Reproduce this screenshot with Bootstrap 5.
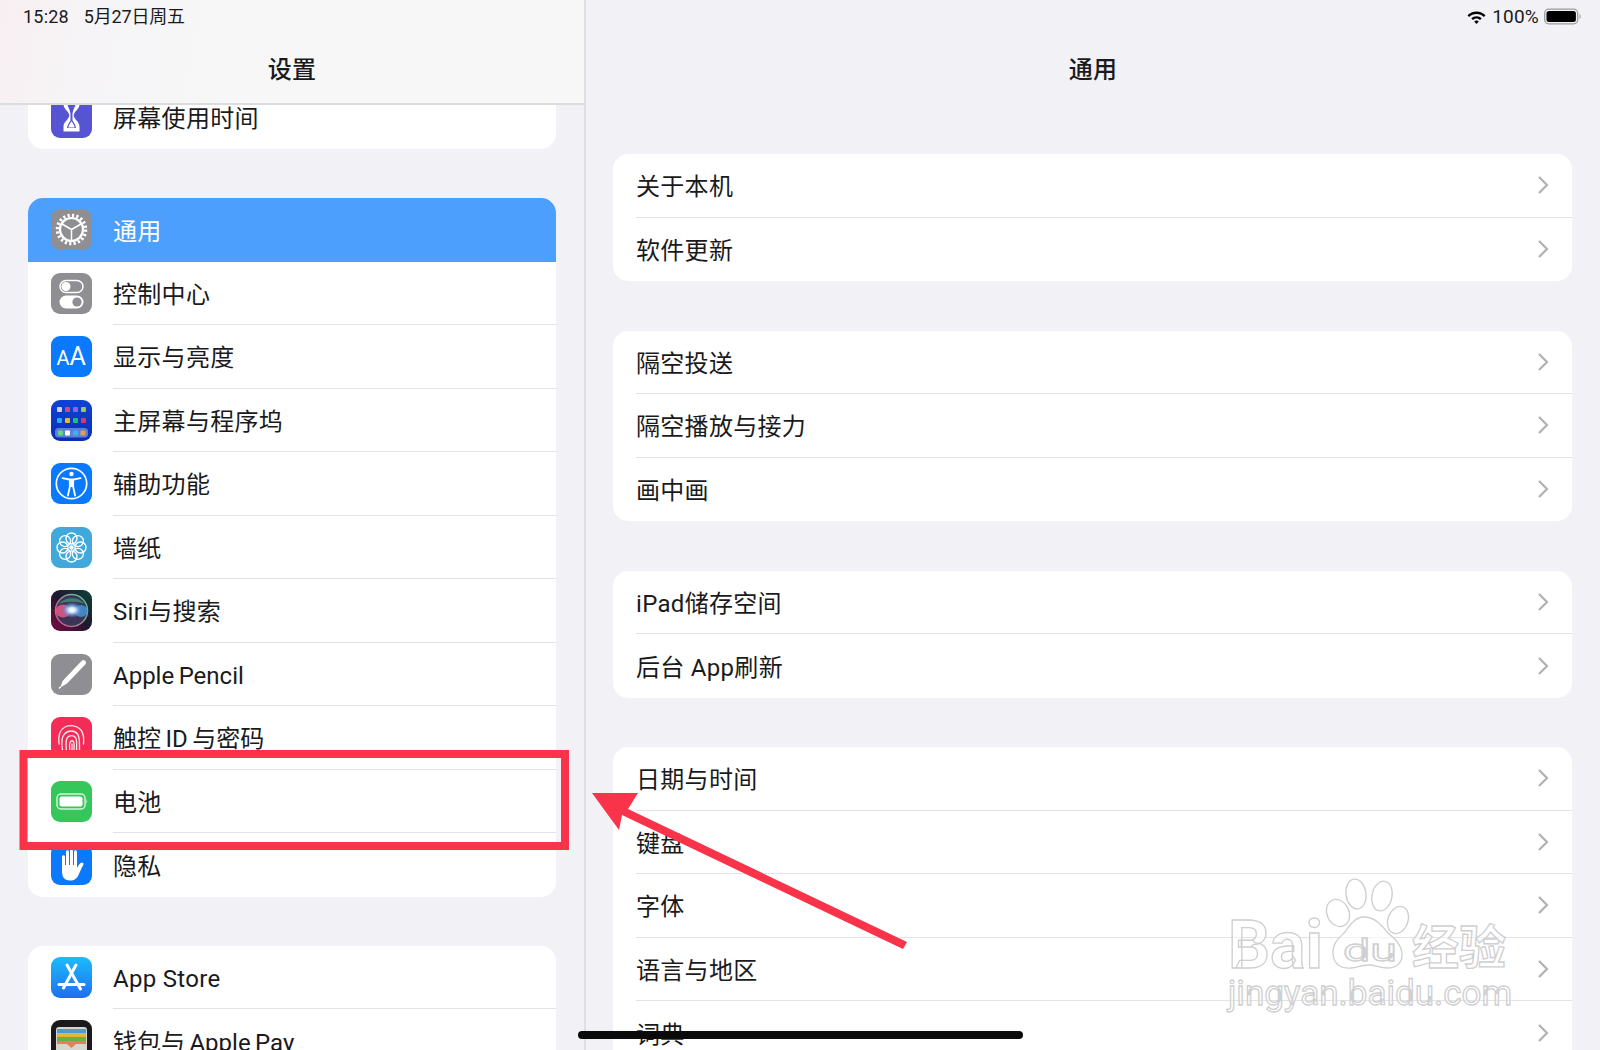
<!DOCTYPE html>
<html lang="zh">
<head>
<meta charset="utf-8">
<title>设置</title>
<link href="https://cdn.jsdelivr.net/npm/bootstrap@5.3.3/dist/css/bootstrap.min.css" rel="stylesheet">
<style>
html,body{height:100%;overflow:hidden}
body{background:#f1f1f6;color:#1a1a1c;font-family:Roboto,"Noto Sans CJK SC",sans-serif;font-size:24px;letter-spacing:.3px}
.ios-stage{width:1600px;height:1050px;overflow:hidden}
.ios-side{width:586px;border-right:2px solid #dfdfe3;height:1050px;overflow:hidden}
.ios-detail{width:1014px;height:1050px;overflow:hidden}
.ios-head{height:105px;flex:none;position:relative;z-index:2}
.ios-side .ios-head{background:linear-gradient(100deg,#f8eff2 0,#f6f4f6 14%,#f7f7f8 40%);border-bottom:2px solid #dcdcdf}
.ios-status{height:33px;font-size:18px;padding:0 23px;line-height:34px;white-space:nowrap;letter-spacing:.2px}
.ios-status-r{padding:0 18px 0 0}
.ios-status-r .ios-pct{font-size:19px;margin:0 -3px 0 -3px}
.ios-status .ios-date{margin-left:15px;letter-spacing:-.2px}
.ios-title{font-size:24px;font-weight:500;line-height:74px;text-align:center;height:72px}
.ios-scroll-l{padding:0 28px;margin-top:-19.5px}
.ios-scroll-r{padding:49px 28px 0 27px}
.ios-group.list-group{--bs-list-group-bg:#fff;--bs-list-group-border-width:0;--bs-list-group-border-radius:15px;margin-bottom:49.5px;flex:none}
.ios-scroll-l .ios-group.list-group{margin-bottom:49px}
.ios-row.list-group-item{height:63.5px;padding:0;display:flex;align-items:center;color:#1a1a1c;background:#fff;border:0}
.ios-row-on.list-group-item{background:#4d9ffd;color:#fff}
.ios-ico{width:41px;height:41px;border-radius:9px;flex:none;margin-left:23px;display:block;overflow:hidden}
.ios-lab{height:100%;flex:1;margin-left:21px;padding-top:4px;display:flex;align-items:center;border-bottom:1.5px solid #e3e3e6;line-height:1;white-space:nowrap}
.ios-row:last-child .ios-lab,.ios-row-on .ios-lab{border-bottom:0}
.ios-lab-r{margin-left:23px;padding-right:22px;justify-content:space-between}
.ios-lat{letter-spacing:0;word-spacing:-1.5px}
.ios-chev{width:13px;height:20px;flex:none;margin-top:-4px}
.ios-over{position:absolute;left:0;top:0;z-index:5;pointer-events:none}
.ios-home{position:absolute;left:578px;top:1031px;width:445px;height:8px;border-radius:4px;background:#0a0a0a;z-index:6}
.ios-wm-t{font-family:Roboto,"Noto Sans CJK SC",sans-serif;fill:rgba(255,255,255,.55);stroke:#cfcfd2;stroke-width:1.3;letter-spacing:0}
.ios-ico text{font-family:Roboto,sans-serif;fill:#fff;letter-spacing:0}
</style>
</head>
<body>
<div class="ios-stage d-flex position-relative">

  <aside class="ios-side d-flex flex-column">
    <header class="ios-head">
      <div class="ios-status"><span>15:28</span><span class="ios-date">5月27日周五</span></div>
      <div class="ios-title">设置</div>
    </header>
    <div class="ios-scroll-l d-flex flex-column">
      <div class="list-group ios-group">
        <div class="list-group-item ios-row">
          <svg class="ios-ico" viewBox="0 0 41 41"><rect width="41" height="41" fill="#5654d3"/><path d="M12.500 4h16v3.500c0 4-4.500 6.500-5.500 9.500-.3.900-.3 1.900 0 2.800 1 3 5.500 5.500 5.500 9.700v5h-16v-5c0-4.200 4.500-6.700 5.500-9.700.3-.9.300-1.900 0-2.800-1-3-5.500-5.500-5.500-9.500z" fill="#fff"/><path d="M16.500 7h8c0 3-3.300 5.500-3 12.500v4c1 2 3 3.500 3.500 7.500h-9c.5-4 2.500-5.500 3.500-7.500v-4c.3-7-3-9.500-3-12.500z" fill="#5654d3"/><path d="M20.500 24c.7 2 3 3.800 3.200 6.500h-6.400c.2-2.700 2.500-4.500 3.200-6.500z" fill="#fff"/></svg>
          <div class="ios-lab">屏幕使用时间</div>
        </div>
      </div>
      <div class="list-group ios-group">
        <div class="list-group-item ios-row ios-row-on">
          <svg class="ios-ico" viewBox="0 0 41 41"><rect width="41" height="41" fill="#8e8e93"/><circle cx="20.500" cy="20.500" r="14.200" fill="none" stroke="#fff" stroke-width="3.200" stroke-dasharray="2.230 2.230"/><circle cx="20.500" cy="20.500" r="11.500" fill="none" stroke="#fff" stroke-width="2.200"/><path d="M20.500 20.500V9.500M20.500 20.500l9.500 5.500M20.500 20.500l-9.500 5.500" transform="rotate(-60 20.500 20.500)" fill="none" stroke="#fff" stroke-width="1.500"/></svg>
          <div class="ios-lab">通用</div>
        </div>
        <div class="list-group-item ios-row">
          <svg class="ios-ico" viewBox="0 0 41 41"><rect width="41" height="41" fill="#8e8e93"/><rect x="9" y="7.500" width="23" height="12" rx="6" fill="none" stroke="#fff" stroke-width="1.500"/><circle cx="15" cy="13.500" r="4.500" fill="#fff"/><rect x="8.500" y="22.500" width="24" height="13" rx="6.500" fill="#fff"/><circle cx="26" cy="29" r="4.600" fill="#8e8e93"/></svg>
          <div class="ios-lab">控制中心</div>
        </div>
        <div class="list-group-item ios-row">
          <svg class="ios-ico" viewBox="0 0 41 41"><rect width="41" height="41" fill="#0b79fb"/><text x="5.500" y="28.500" font-size="20">A</text><text x="18.500" y="28.500" font-size="25">A</text></svg>
          <div class="ios-lab">显示与亮度</div>
        </div>
        <div class="list-group-item ios-row">
          <svg class="ios-ico" viewBox="0 0 41 41"><defs><linearGradient id="hg" x1="0" y1="0" x2="0" y2="1"><stop offset="0" stop-color="#0f41d8"/><stop offset="1" stop-color="#0a2fb4"/></linearGradient></defs><rect width="41" height="41" fill="url(#hg)"/><g><rect x="6" y="7" width="5" height="5" rx="1" fill="#c9d3e8"/><rect x="14" y="7" width="5" height="5" rx="1" fill="#d8467e"/><rect x="22" y="7" width="5" height="5" rx="1" fill="#8d63e6"/><rect x="30" y="7" width="5" height="5" rx="1" fill="#9bc660"/><rect x="6" y="18" width="5" height="5" rx="1" fill="#1fb0ee"/><rect x="14" y="18" width="5" height="5" rx="1" fill="#efb23a"/><rect x="22" y="18" width="5" height="5" rx="1" fill="#21b78f"/><rect x="30" y="18" width="5" height="5" rx="1" fill="#df3a55"/></g><rect x="4" y="28" width="33" height="9.500" rx="3.500" fill="#5f7fd4"/><rect x="7" y="30.500" width="5" height="5" rx="1" fill="#62d68a"/><rect x="14" y="30.500" width="5" height="5" rx="1" fill="#fff"/><rect x="22" y="30.500" width="5" height="5" rx="1" fill="#35b5ef"/><rect x="29.500" y="30.500" width="5" height="5" rx="1" fill="#e89a55"/></svg>
          <div class="ios-lab">主屏幕与程序坞</div>
        </div>
        <div class="list-group-item ios-row">
          <svg class="ios-ico" viewBox="0 0 41 41"><rect width="41" height="41" fill="#0b79fb"/><circle cx="20.500" cy="20.500" r="15.200" fill="none" stroke="#fff" stroke-width="1.700"/><circle cx="20.500" cy="11" r="2.200" fill="#fff"/><path d="M11.500 15.200l6.800 1.300h4.400l6.800-1.300" fill="none" stroke="#fff" stroke-width="1.800" stroke-linecap="round" stroke-linejoin="round"/><path d="M18.800 16.800h3.400v7.200l1.900 8.500M18.800 16.800v7.200l-1.900 8.500" fill="none" stroke="#fff" stroke-width="1.800" stroke-linecap="round"/><rect x="18.800" y="16.500" width="3.400" height="7.500" fill="#fff"/></svg>
          <div class="ios-lab">辅助功能</div>
        </div>
        <div class="list-group-item ios-row">
          <svg class="ios-ico" viewBox="0 0 41 41"><rect width="41" height="41" fill="#3fa9dc"/><g fill="none" stroke="#fff" stroke-width="1.400"><circle cx="20.500" cy="11.500" r="5.500"/><circle cx="20.500" cy="29.500" r="5.500"/><circle cx="11.500" cy="20.500" r="5.500"/><circle cx="29.500" cy="20.500" r="5.500"/><circle cx="14.100" cy="14.100" r="5.500"/><circle cx="26.900" cy="14.100" r="5.500"/><circle cx="14.100" cy="26.900" r="5.500"/><circle cx="26.900" cy="26.900" r="5.500"/></g><circle cx="20.500" cy="20.500" r="2.200" fill="#fff"/></svg>
          <div class="ios-lab">墙纸</div>
        </div>
        <div class="list-group-item ios-row">
          <svg class="ios-ico" viewBox="0 0 41 41"><defs><linearGradient id="sg" x1="0" y1="1" x2="1" y2="0"><stop offset="0" stop-color="#7a0a45"/><stop offset=".5" stop-color="#20182f"/><stop offset="1" stop-color="#0d4038"/></linearGradient><radialGradient id="sc"><stop offset="0" stop-color="#fff"/><stop offset=".3" stop-color="#d5ecff"/><stop offset=".7" stop-color="#6f93dd" stop-opacity=".6"/><stop offset="1" stop-color="#4d74c9" stop-opacity="0"/></radialGradient><linearGradient id="sr" x1="0" y1="1" x2="1" y2="0"><stop offset="0" stop-color="#e0478a"/><stop offset="1" stop-color="#4fcf9e"/></linearGradient></defs><rect width="41" height="41" fill="url(#sg)"/><circle cx="20.500" cy="20.500" r="16" fill="#3a3556" stroke="url(#sr)" stroke-width="1.500"/><ellipse cx="12" cy="21" rx="7.500" ry="6.500" fill="#e2557f" opacity=".9"/><ellipse cx="30" cy="21" rx="6.500" ry="6" fill="#3f90d0" opacity=".9"/><path d="M8 14c5-7 20-8 25 0-6-3-19-3-25 0z" fill="#38a47f" opacity=".7"/><ellipse cx="21" cy="20" rx="11" ry="8" fill="url(#sc)"/></svg>
          <div class="ios-lab">Siri与搜索</div>
        </div>
        <div class="list-group-item ios-row">
          <svg class="ios-ico" viewBox="0 0 41 41"><rect width="41" height="41" fill="#8e8e93"/><path d="M31.500 7c1.500-1 3.500 1 2.500 2.700L15 29.500l-4.500 2.500 1.800-4.800z" fill="#fff" stroke="#fff" stroke-width="1.400" stroke-linejoin="round"/><path d="M10 32.500l-2 2" stroke="#fff" stroke-width="1.300"/></svg>
          <div class="ios-lab ios-lat">Apple Pencil</div>
        </div>
        <div class="list-group-item ios-row">
          <svg class="ios-ico" viewBox="0 0 41 41"><rect width="41" height="41" fill="#f52c58"/><g fill="none" stroke="#fff" stroke-width="1.300" stroke-linecap="round" opacity=".9"><path d="M8 27c-1-8 0-14 6-17 5-2.500 12-1.500 16 3 3 4 3 9 2.500 14"/><path d="M11.500 33c-1-6-1-13 2-16 3.500-4 10-4 13 0 2.500 3 2 9 2 16"/><path d="M15.500 35c-.5-6-1.500-11 1-14.500 2-2.500 6-2.500 8 0 2 3 1 9 1 14.500"/><path d="M19 36c0-5-1.500-9 .5-11.500 1-1 2-1 3 0 1.500 2.500 0 7 .5 11.500"/><path d="M21 27v9"/></g></svg>
          <div class="ios-lab ios-lat">触控 ID 与密码</div>
        </div>
        <div class="list-group-item ios-row">
          <svg class="ios-ico" viewBox="0 0 41 41"><rect width="41" height="41" fill="#35c759"/><rect x="6" y="13" width="28" height="15" rx="4" fill="none" stroke="#d5f2dc" stroke-width="1.500"/><rect x="8.500" y="15.500" width="23" height="10" rx="2" fill="#fff"/><path d="M35.500 18.500c1 .5 1 3.500 0 4z" fill="#d5f2dc"/></svg>
          <div class="ios-lab">电池</div>
        </div>
        <div class="list-group-item ios-row">
          <svg class="ios-ico" viewBox="0 0 41 41"><rect width="41" height="41" fill="#0b79fb"/><path d="M11 13c0-2.500 3-2.500 3 0v8h1V8c0-2.500 3-2.500 3 0v13h1V6.500c0-2.500 3-2.500 3 0V21h1V8c0-2.500 3-2.500 3 0v16c1.500-3 3-5.500 5-5.500 2 .2 1.700 2 1 3-1.500 2.500-3 6-4.500 9.500-1.500 3.500-4 5.500-8.500 5.500-6 0-8-4-8-9.500z" fill="#fff"/></svg>
          <div class="ios-lab">隐私</div>
        </div>
      </div>
      <div class="list-group ios-group">
        <div class="list-group-item ios-row">
          <svg class="ios-ico" viewBox="0 0 41 41"><defs><linearGradient id="ag" x1="0" y1="0" x2="0" y2="1"><stop offset="0" stop-color="#1cbcfb"/><stop offset="1" stop-color="#1d6ff0"/></linearGradient></defs><rect width="41" height="41" fill="url(#ag)"/><g fill="none" stroke="#fff" stroke-width="3" stroke-linecap="round"><path d="M25 8L12.500 31"/><path d="M16 8L29.500 32"/><path d="M8 27.500h25"/></g></svg>
          <div class="ios-lab">App Store</div>
        </div>
        <div class="list-group-item ios-row">
          <svg class="ios-ico" viewBox="0 0 41 41"><rect width="41" height="41" fill="#1a1a1c"/><rect x="5" y="7" width="31" height="30" rx="3" fill="#d9d6cf"/><rect x="6" y="9" width="29" height="4" fill="#4b9bd1"/><rect x="6" y="13" width="29" height="4" fill="#e5b53a"/><rect x="6" y="17" width="29" height="4" fill="#6cae4c"/><path d="M6 21h29v3H25l-4.500 4-4.500-4H6z" fill="#e67d5c"/></svg>
          <div class="ios-lab ios-lat">钱包与 Apple Pay</div>
        </div>
      </div>
    </div>
  </aside>

  <main class="ios-detail d-flex flex-column">
    <header class="ios-head">
      <div class="ios-status ios-status-r d-flex justify-content-end align-items-center gap-2">
        <svg width="21" height="16" viewBox="0 0 20 16"><path d="M10 2.500C6.500 2.500 3.300 3.900 1 6.200l1.600 1.900C4.500 6.200 7.100 5 10 5s5.500 1.200 7.400 3.100L19 6.200C16.700 3.900 13.500 2.500 10 2.500z" fill="#000"/><path d="M10 7.300c-2 0-3.900.8-5.200 2.100l1.700 1.700c.9-.9 2.200-1.500 3.500-1.500s2.600.6 3.500 1.500l1.700-1.700C13.900 8.100 12 7.300 10 7.300z" fill="#000"/><path d="M10 11.500c-.9 0-1.700.3-2.300.9L10 15l2.300-2.600c-.6-.6-1.400-.9-2.300-.9z" fill="#000"/></svg>
        <span class="ios-pct">100%</span>
        <svg width="38" height="17" viewBox="0 0 38 16"><rect x=".7" y=".7" width="33" height="14.600" rx="4" fill="none" stroke="#9b9b9e" stroke-width="1.300"/><rect x="2.500" y="2.500" width="29.400" height="11" rx="2.500" fill="#000"/><path d="M35.500 5.500c1.500.5 1.500 4.500 0 5z" fill="#9b9b9e"/></svg>
      </div>
      <div class="ios-title">通用</div>
    </header>
    <div class="ios-scroll-r d-flex flex-column">
      <div class="list-group ios-group">
        <div class="list-group-item ios-row"><div class="ios-lab ios-lab-r"><span>关于本机</span><svg class="ios-chev" viewBox="0 0 13 20"><path d="M2 2l8 8-8 8" fill="none" stroke="#b1b1b5" stroke-width="2.200"/></svg></div></div>
        <div class="list-group-item ios-row"><div class="ios-lab ios-lab-r"><span>软件更新</span><svg class="ios-chev" viewBox="0 0 13 20"><path d="M2 2l8 8-8 8" fill="none" stroke="#b1b1b5" stroke-width="2.200"/></svg></div></div>
      </div>
      <div class="list-group ios-group">
        <div class="list-group-item ios-row"><div class="ios-lab ios-lab-r"><span>隔空投送</span><svg class="ios-chev" viewBox="0 0 13 20"><path d="M2 2l8 8-8 8" fill="none" stroke="#b1b1b5" stroke-width="2.200"/></svg></div></div>
        <div class="list-group-item ios-row"><div class="ios-lab ios-lab-r"><span>隔空播放与接力</span><svg class="ios-chev" viewBox="0 0 13 20"><path d="M2 2l8 8-8 8" fill="none" stroke="#b1b1b5" stroke-width="2.200"/></svg></div></div>
        <div class="list-group-item ios-row"><div class="ios-lab ios-lab-r"><span>画中画</span><svg class="ios-chev" viewBox="0 0 13 20"><path d="M2 2l8 8-8 8" fill="none" stroke="#b1b1b5" stroke-width="2.200"/></svg></div></div>
      </div>
      <div class="list-group ios-group">
        <div class="list-group-item ios-row"><div class="ios-lab ios-lab-r"><span>iPad储存空间</span><svg class="ios-chev" viewBox="0 0 13 20"><path d="M2 2l8 8-8 8" fill="none" stroke="#b1b1b5" stroke-width="2.200"/></svg></div></div>
        <div class="list-group-item ios-row"><div class="ios-lab ios-lab-r"><span>后台 App刷新</span><svg class="ios-chev" viewBox="0 0 13 20"><path d="M2 2l8 8-8 8" fill="none" stroke="#b1b1b5" stroke-width="2.200"/></svg></div></div>
      </div>
      <div class="list-group ios-group">
        <div class="list-group-item ios-row"><div class="ios-lab ios-lab-r"><span>日期与时间</span><svg class="ios-chev" viewBox="0 0 13 20"><path d="M2 2l8 8-8 8" fill="none" stroke="#b1b1b5" stroke-width="2.200"/></svg></div></div>
        <div class="list-group-item ios-row"><div class="ios-lab ios-lab-r"><span>键盘</span><svg class="ios-chev" viewBox="0 0 13 20"><path d="M2 2l8 8-8 8" fill="none" stroke="#b1b1b5" stroke-width="2.200"/></svg></div></div>
        <div class="list-group-item ios-row"><div class="ios-lab ios-lab-r"><span>字体</span><svg class="ios-chev" viewBox="0 0 13 20"><path d="M2 2l8 8-8 8" fill="none" stroke="#b1b1b5" stroke-width="2.200"/></svg></div></div>
        <div class="list-group-item ios-row"><div class="ios-lab ios-lab-r"><span>语言与地区</span><svg class="ios-chev" viewBox="0 0 13 20"><path d="M2 2l8 8-8 8" fill="none" stroke="#b1b1b5" stroke-width="2.200"/></svg></div></div>
        <div class="list-group-item ios-row"><div class="ios-lab ios-lab-r"><span>词典</span><svg class="ios-chev" viewBox="0 0 13 20"><path d="M2 2l8 8-8 8" fill="none" stroke="#b1b1b5" stroke-width="2.200"/></svg></div></div>
      </div>
    </div>
  </main>

  <svg class="ios-over" width="1600" height="1050" viewBox="0 0 1600 1050">
    <rect x="23.500" y="754" width="541.500" height="92" fill="none" stroke="#f93349" stroke-width="8"/>
    <path d="M592 793H638L628 809 907 942 903 949 622 815 619 830z" fill="#f93349"/>
    <g fill="none" stroke="#cfcfd2" stroke-width="1.300">
      <ellipse cx="1338" cy="913" rx="11" ry="14" transform="rotate(-25 1338 913)"/>
      <ellipse cx="1356" cy="894" rx="10" ry="15" transform="rotate(-8 1356 894)"/>
      <ellipse cx="1382" cy="896" rx="10" ry="15" transform="rotate(12 1382 896)"/>
      <ellipse cx="1398" cy="920" rx="10" ry="14" transform="rotate(20 1398 920)"/>
      <path d="M1364 917c-9 0-15 9-19 15-5 5-13 11-12 22 1 11 9 15 18 14 7-1 12-3 18-3 6 0 11 3 19 3 9 0 15-6 14-15-1-9-7-14-14-20-5-6-12-16-24-16z" fill="rgba(255,255,255,.55)"/>
    </g>
    <text class="ios-wm-t" x="1228" y="968" font-size="66" font-weight="700">Bai</text>
    <text class="ios-wm-t" x="1343" y="961" font-size="32" textLength="54" lengthAdjust="spacingAndGlyphs">du</text>
    <text class="ios-wm-t" x="1412" y="964" font-size="47" font-weight="700">经验</text>
    <text class="ios-wm-t" x="1228" y="1005" font-size="35">jingyan.baidu.com</text>
  </svg>
  <div class="ios-home"></div>
</div>
<script src="https://cdn.jsdelivr.net/npm/bootstrap@5.3.3/dist/js/bootstrap.bundle.min.js"></script>
</body>
</html>
